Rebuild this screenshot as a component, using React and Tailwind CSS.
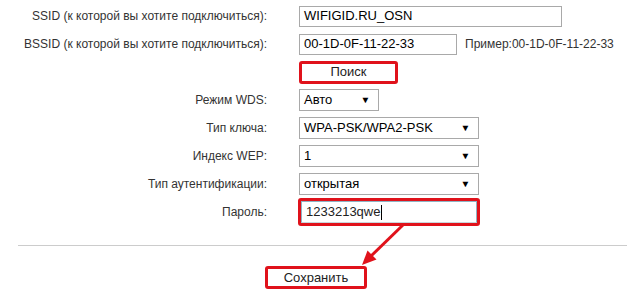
import React from "react";

const font = { fontFamily: '"Liberation Sans", Arial, sans-serif' };

function Arrow() {
  return (
    <span className="inline-block text-[9px] leading-none text-black scale-x-[1.1]">▼</span>
  );
}

function Row({ label, children }) {
  return (
    <div className="flex items-center h-[28px]">
      <div className="w-[267px] text-right text-[12px] text-[#333] whitespace-nowrap">{label}</div>
      <div className="ml-[32px] flex items-center">{children}</div>
    </div>
  );
}

function Select({ value, w }) {
  return (
    <div className={`${w} h-[22px] border border-[#a9a9a9] bg-white flex items-center justify-between pl-[4px] pr-[8px] text-[13px] text-black`}>
      <span>{value}</span>
      <Arrow />
    </div>
  );
}

export default function App() {
  return (
    <div className="relative w-[627px] h-[294px] bg-white overflow-hidden" style={font}>
      <div className="pt-[2px] flex flex-col">
        <Row label="SSID (к которой вы хотите подключиться):">
          <div className="w-[263px] h-[21px] border border-[#a9a9a9] flex items-center pl-[4px] text-[13px] text-black">WIFIGID.RU_OSN</div>
        </Row>
        <Row label="BSSID (к которой вы хотите подключиться):">
          <div className="w-[158px] h-[21px] border border-[#a9a9a9] flex items-center pl-[4px] text-[13px] text-black">00-1D-0F-11-22-33</div>
          <span className="ml-[8px] text-[12px] text-[#333]">Пример:00-1D-0F-11-22-33</span>
        </Row>
        <Row label="">
          <div className="w-[99px] h-[23px] border-[3px] border-[#e0121b] rounded-[3px] bg-white flex items-center justify-center text-[13px] text-[#222]">Поиск</div>
        </Row>
        <Row label="Режим WDS:">
          <Select value="Авто" w="w-[80px]" />
        </Row>
        <Row label="Тип ключа:">
          <Select value="WPA-PSK/WPA2-PSK" w="w-[180px]" />
        </Row>
        <Row label="Индекс WEP:">
          <Select value="1" w="w-[180px]" />
        </Row>
        <Row label="Тип аутентификации:">
          <Select value="открытая" w="w-[180px]" />
        </Row>
        <div className="flex items-center h-[28px]">
          <div className="w-[267px] text-right text-[12px] text-[#333]">Пароль:</div>
          <div className="ml-[31px] w-[182px] h-[28px] border-[3px] border-[#e0121b] rounded-[3px] bg-white">
            <div className="h-full border border-[#8fb4c4] border-b-[#c9d6dc] flex items-center pl-[4px] text-[13px] text-[#222]">
              1233213qwe<span className="inline-block w-px h-[15px] bg-black ml-px"></span>
            </div>
          </div>
        </div>
        <div className="ml-[18px] mt-[19px] h-px bg-[#cccccc]"></div>
        <div className="mt-[20px] ml-[265px] w-[102px] h-[23px] border-[3px] border-[#e0121b] rounded-[3px] bg-white flex items-center justify-center text-[13px] text-[#222]">Сохранить</div>
      </div>
      <svg className="absolute left-0 top-0 pointer-events-none" width="627" height="294">
        <line x1="404" y1="224" x2="370" y2="257" stroke="#e0121b" strokeWidth="3" />
        <polygon points="362,265 367.5,250.5 376.5,259.5" fill="#e0121b" />
      </svg>
    </div>
  );
}
